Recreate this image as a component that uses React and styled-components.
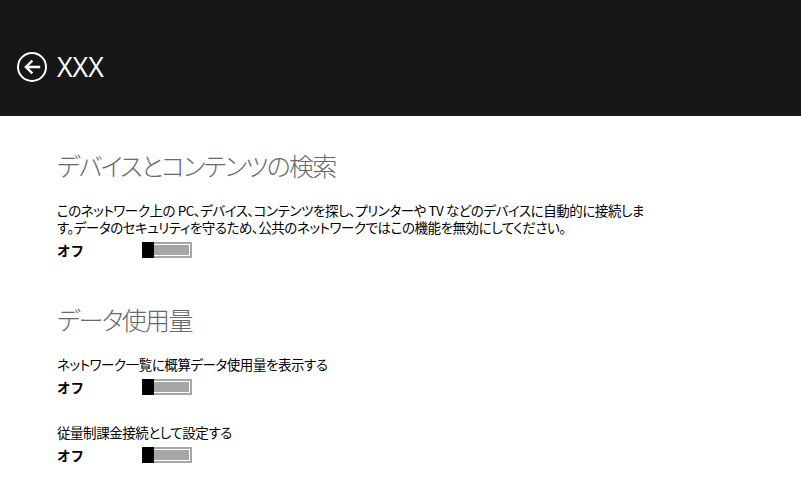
import styled, { createGlobalStyle } from 'styled-components';

const GlobalStyle = createGlobalStyle`
  html, body {
    margin: 0;
    padding: 0;
    background: #ffffff;
  }
  body {
    font-family: "Noto Sans CJK JP", "Noto Sans", sans-serif;
    color: #000000;
  }
`;

const BackIcon = () => (
  <svg width="32" height="32" viewBox="0 0 32 32" fill="none">
    <circle cx="16" cy="16" r="14" stroke="#ffffff" strokeWidth="2" />
    <path
      d="M23 16H10M15.5 10.5L10 16L15.5 21.5"
      stroke="#ffffff"
      strokeWidth="2.4"
      strokeLinecap="square"
    />
  </svg>
);

const sections = [
  {
    id: 'devices',
    title: 'デバイスとコンテンツの検索',
    items: [
      {
        id: 'discover',
        lines: [
          'このネットワーク上の PC、デバイス、コンテンツを探し、プリンターや TV などのデバイスに自動的に接続しま',
          'す。データのセキュリティを守るため、公共のネットワークではこの機能を無効にしてください。',
        ],
      },
    ],
  },
  {
    id: 'usage',
    title: 'データ使用量',
    items: [
      { id: 'estimate', lines: ['ネットワーク一覧に概算データ使用量を表示する'] },
      { id: 'metered', lines: ['従量制課金接続として設定する'] },
    ],
  },
];

const App = () => {
  return (
    <Page>
      <GlobalStyle />
      <Header>
        <BackButton aria-label="戻る">
          <BackIcon />
        </BackButton>
        <Title>XXX</Title>
      </Header>
      <Content>
        {sections.map((section) => (
          <Section key={section.id}>
            <Heading>{section.title}</Heading>
            {section.items.map((item) => (
              <Setting key={item.id}>
                <Description>
                  {item.lines.map((line) => (
                    <Line key={line}>{line}</Line>
                  ))}
                </Description>
                <ToggleRow>
                  <State>オフ</State>
                  <Toggle>
                    <Thumb />
                  </Toggle>
                </ToggleRow>
              </Setting>
            ))}
          </Section>
        ))}
      </Content>
    </Page>
  );
};

const Page = styled.div`
  width: 801px;
  min-height: 493px;
  background: #ffffff;
`;

const Header = styled.header`
  height: 116px;
  background: #171717;
  display: flex;
  align-items: center;
  padding: 18px 0 0 16px;
  box-sizing: border-box;
  gap: 9px;
`;

const BackButton = styled.div`
  width: 32px;
  height: 32px;
  display: flex;
`;

const Title = styled.h1`
  margin: 0;
  font-family: "Open Sans", "Liberation Sans", sans-serif;
  font-weight: 400;
  font-size: 27px;
  line-height: 32px;
  color: #ffffff;
  letter-spacing: 0;
`;

const Content = styled.main`
  padding: 33px 0 0 57px;
  display: flex;
  flex-direction: column;
  gap: 45px;
`;

const Section = styled.section`
  display: flex;
  flex-direction: column;
  gap: 21px;
`;

const Heading = styled.h2`
  margin: 0;
  font-size: 25px;
  line-height: 32px;
  font-weight: 300;
  color: #686868;
  font-feature-settings: "palt";
  letter-spacing: -1.7px;
`;

const Setting = styled.div`
  display: flex;
  flex-direction: column;
  gap: 6px;
  & + & {
    margin-top: 8px;
  }
`;

const Description = styled.div`
  font-size: 13.5px;
  line-height: 17px;
  font-feature-settings: "palt";
  letter-spacing: -0.45px;
`;

const Line = styled.div`
  white-space: nowrap;
`;

const ToggleRow = styled.div`
  display: flex;
  align-items: center;
  height: 16px;
`;

const State = styled.span`
  width: 85px;
  font-size: 13.5px;
  font-weight: 700;
  line-height: 16px;
`;

const Toggle = styled.div`
  position: relative;
  width: 50px;
  height: 16px;
  background: #a6a6a6;
  box-sizing: border-box;
  &::after {
    content: '';
    position: absolute;
    inset: 2px 2px 2px 2px;
    border: 1px solid #ffffff;
  }
`;

const Thumb = styled.div`
  position: absolute;
  left: 0;
  top: 0;
  width: 12px;
  height: 16px;
  background: #000000;
  z-index: 1;
`;

export default App;
